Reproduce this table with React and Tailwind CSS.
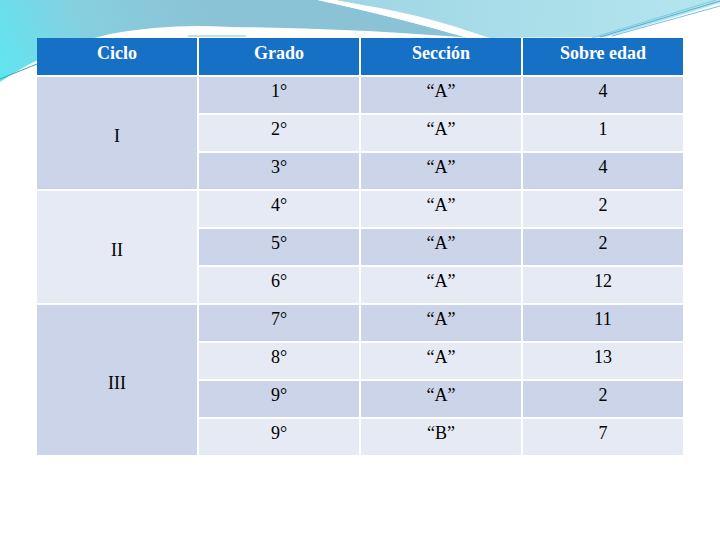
const rows = [
  { grado: "1°", seccion: "“A”", edad: "4" },
  { grado: "2°", seccion: "“A”", edad: "1" },
  { grado: "3°", seccion: "“A”", edad: "4" },
  { grado: "4°", seccion: "“A”", edad: "2" },
  { grado: "5°", seccion: "“A”", edad: "2" },
  { grado: "6°", seccion: "“A”", edad: "12" },
  { grado: "7°", seccion: "“A”", edad: "11" },
  { grado: "8°", seccion: "“A”", edad: "13" },
  { grado: "9°", seccion: "“A”", edad: "2" },
  { grado: "9°", seccion: "“B”", edad: "7" },
]

const ciclos = [
  { label: "I", start: 0, span: "row-span-3", bg: "bg-[#cbd4e8]" },
  { label: "II", start: 3, span: "row-span-3", bg: "bg-[#e6eaf4]" },
  { label: "III", start: 6, span: "row-span-4", bg: "bg-[#cbd4e8]" },
]

function Banner() {
  return (
    <svg className="absolute top-0 left-0" width="720" height="90" viewBox="0 0 720 90">
      <defs>
        <linearGradient id="blueBand" x1="0" y1="80" x2="200" y2="0" gradientUnits="userSpaceOnUse">
          <stop offset="0" stopColor="#5fe6f2" />
          <stop offset="0.45" stopColor="#86cfdf" />
          <stop offset="1" stopColor="#8bc3d6" />
        </linearGradient>
        <linearGradient id="lightBand" x1="340" y1="0" x2="720" y2="30" gradientUnits="userSpaceOnUse">
          <stop offset="0" stopColor="#9fd6e4" />
          <stop offset="1" stopColor="#b4e6ef" />
        </linearGradient>
      </defs>
      {/* right light region */}
      <path d="M330 0 L720 0 L720 3 Q660 22 606 37 L488 38 Q420 12 330 0 Z" fill="url(#lightBand)" />
      {/* left blue region */}
      <path d="M0 0 L318 0 Q400 18 468 38 L460 37 Q340 28 230 27 Q170 23 110 34 Q50 48 0 82 Z" fill="url(#blueBand)" />
      {/* white swoosh */}
      <path d="M318 0 L336 0 Q420 16 490 38 L468 38 Q400 18 318 0 Z" fill="#ffffff" />
      {/* thin lines right */}
      <path d="M600 37 L720 1" stroke="#3f9fd0" strokeWidth="0.8" fill="none" />
      <path d="M612 36 L720 6" stroke="#56b0d8" strokeWidth="0.8" fill="none" />
      <path d="M592 38 L716 0" stroke="#6cbcdc" strokeWidth="0.7" fill="none" />
      {/* thin line left */}
      <path d="M0 79 L37 64" stroke="#3aa3ad" strokeWidth="1" fill="none" />
      <path d="M188 36 L246 36" stroke="#7cc6d8" strokeWidth="1" fill="none" />
    </svg>
  )
}

export default function App() {
  return (
    <div className="relative w-[720px] h-[540px] bg-white overflow-hidden font-[family-name:Liberation_Serif,serif]">
      <Banner />
      <div className="relative pt-[38px] pl-[37px]">
        <div className="grid grid-cols-[160px_160px_160px_160px] grid-rows-[37px_repeat(10,36px)] gap-[2px] bg-white w-[646px] text-[18px] leading-[21px]">
          {["Ciclo", "Grado", "Sección", "Sobre edad"].map((h) => (
            <div key={h} className="bg-[#1670c6] text-white font-bold text-center pt-[5px]">
              {h}
            </div>
          ))}
          {rows.map((r, i) => {
            const ciclo = ciclos.find((c) => c.start === i)
            const bg = i % 2 === 0 ? "bg-[#cbd4e8]" : "bg-[#e6eaf4]"
            return [
              ciclo && (
                <div key={"c" + i} className={`${ciclo.span} ${ciclo.bg} flex items-center justify-center pt-[6px] text-black`}>
                  {ciclo.label}
                </div>
              ),
              <div key={"g" + i} className={`${bg} text-center pt-[4px] text-black`}>{r.grado}</div>,
              <div key={"s" + i} className={`${bg} text-center pt-[4px] text-black`}>{r.seccion}</div>,
              <div key={"e" + i} className={`${bg} text-center pt-[4px] text-black`}>{r.edad}</div>,
            ]
          })}
        </div>
      </div>
    </div>
  )
}
